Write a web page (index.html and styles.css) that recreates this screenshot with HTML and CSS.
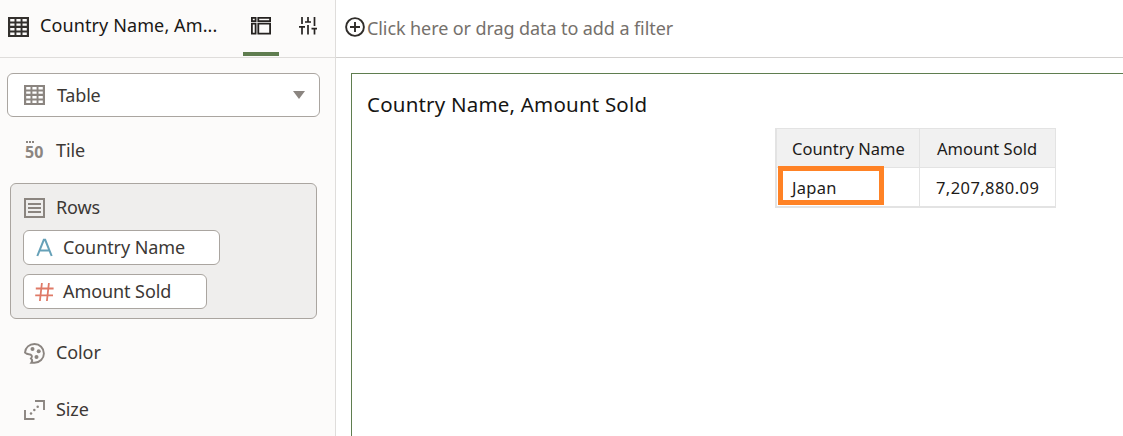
FILE: index.html
```html
<!DOCTYPE html>
<html lang="en">
<head>
<meta charset="utf-8">
<title>Country Name, Amount Sold</title>
<link rel="stylesheet" href="styles.css">
</head>
<body>
<svg class="defs" width="0" height="0">
  <symbol id="grid" viewBox="0 0 21 20">
    <path fill="currentColor" fill-rule="evenodd" d="M0 0H21V20H0ZM2.200 2V4.500H6.500V2ZM8.400 2V4.500H12.600V2ZM14.500 2V4.500H18.800V2ZM2.200 6.500V8.700H6.500V6.500ZM8.400 6.500V8.700H12.600V6.500ZM14.500 6.500V8.700H18.800V6.500ZM2.200 11V13.500H6.500V11ZM8.400 11V13.500H12.600V11ZM14.500 11V13.500H18.800V11ZM2.200 15.500V18H6.500V15.500ZM8.400 15.500V18H12.600V15.500ZM14.500 15.500V18H18.800V15.500Z"/>
  </symbol>
</svg>
<div class="app">
  <aside class="sidebar">
    <header class="side-head">
      <svg class="head-icon" width="21" height="20"><use href="#grid"/></svg>
      <span class="head-title">Country Name, Am...</span>
      <button class="tab active" aria-label="Grammar">
        <svg width="20" height="18" viewBox="0 0 20 18" fill="none" stroke="currentColor" stroke-width="1.800"><path d="M.9.900H4.600V4.100H.9ZM7.300.900H19.100V4.100H7.300ZM.9 6.600H4.600V16.600H.9ZM7.300 6.600H19.100V16.600H7.300Z"/></svg>
      </button>
      <button class="tab" aria-label="Properties">
        <svg width="18" height="18" viewBox="0 0 18 18" fill="none" stroke="currentColor" stroke-width="1.700"><path d="M3 0V7M0 9.900H6M3 9.900V17.500M9 0V5M6 5H12M9 8V17.500M15.500 0V9M12.500 11.600H18M15.500 11.600V17.500"/></svg>
      </button>
    </header>
    <div class="select">
      <svg class="row-icon" width="21" height="20"><use href="#grid"/></svg>
      <span class="label">Table</span>
      <i class="caret"></i>
    </div>
    <div class="drop tile">
      <span class="tile-icon"><i></i><b>50</b></span>
      <span class="label">Tile</span>
    </div>
    <section class="rows">
      <div class="rows-head">
        <svg class="row-icon" width="21" height="20" viewBox="0 0 21 20" fill="none" stroke="currentColor" stroke-width="2"><path d="M1 1H20V19H1Z"/><path d="M4 6H17M4 10H17M4 14H17" stroke-width="1.800"/></svg>
        <span class="label">Rows</span>
      </div>
      <div class="chip country">
        <svg class="blue" width="22" height="20" viewBox="0 0 22 20" fill="none" stroke="currentColor" stroke-width="2"><path d="M3.300 18 9.800 1.800H11.200L17.700 18M5.700 12.600H15.300"/></svg>
        <span class="label">Country Name</span>
      </div>
      <div class="chip amount">
        <svg class="red" width="22" height="20" viewBox="0 0 22 20" fill="none" stroke="currentColor" stroke-width="1.800"><path d="M7.900 1 5.900 19M14.900 1 12.900 19M1.800 6.500H19.600M1.200 13.300H19"/></svg>
        <span class="label">Amount Sold</span>
      </div>
    </section>
    <div class="drop color">
      <svg class="row-icon" width="21" height="21" viewBox="0 0 21 21"><path fill="none" stroke="currentColor" stroke-width="1.900" d="M1 9.500C1.300 4.500 5.300 1 10.500 1A9.400 9.400 0 0 1 10.500 19.800H7.300C8.300 18.400 8.200 16.400 7 15.400C9 13.500 7.500 11.200 4.800 11.200C3.300 11.200 2.300 10.700 1 9.500Z"/><g fill="currentColor"><circle cx="8.500" cy="6" r="2"/><circle cx="14.700" cy="8.200" r="2"/><circle cx="12.500" cy="14" r="2"/></g></svg>
      <span class="label">Color</span>
    </div>
    <div class="drop size">
      <svg class="row-icon" width="21" height="20" viewBox="0 0 21 20"><path fill="none" stroke="currentColor" stroke-width="1.900" d="M11 1H20V10M1 10V19H10.500"/><g fill="currentColor"><circle cx="7" cy="13.500" r="1.250"/><circle cx="10.300" cy="10" r="1.250"/><circle cx="13.700" cy="6.700" r="1.250"/></g></svg>
      <span class="label">Size</span>
    </div>
  </aside>
  <main class="main">
    <div class="filter-bar">
      <svg width="20" height="20" viewBox="0 0 20 20" fill="none" stroke="currentColor" stroke-width="1.900"><circle cx="10" cy="10" r="8.900"/><path d="M5 10H15M10 5V15"/></svg>
      <span class="filter-text">Click here or drag data to add a filter</span>
    </div>
    <section class="canvas">
      <h1 class="viz-title">Country Name, Amount Sold</h1>
      <div class="table">
        <div class="cell th first"><span>Country Name</span></div>
        <div class="cell th"><span>Amount Sold</span></div>
        <div class="cell td first"><span class="t-japan">Japan</span></div>
        <div class="cell td"><span class="t-value">7,207,880.09</span></div>
        <div class="highlight"></div>
      </div>
    </section>
  </main>
</div>
</body>
</html>
```
FILE: styles.css
```css
* { box-sizing: border-box; }
body { margin: 0; background: #fff; font-family: "Noto Sans", "Open Sans", sans-serif; font-size: 18px; color: #3c3835; overflow: hidden; }
svg { display: block; flex: none; }
.defs { position: absolute; }
.app { display: flex; height: 436px; }
.label, .head-title, .filter-text, .viz-title, .cell span { white-space: nowrap; }

.sidebar { width: 336px; flex: none; background: #fcfbfa; border-right: 1px solid #dfdddb; }
.side-head { display: flex; height: 58px; border-bottom: 1px solid #dfdddb; padding-left: 8px; }
.head-icon { margin-top: 17px; color: #33302d; }
.head-title { flex: none; width: 214px; padding: 12px 0 0 11px; line-height: 26px; letter-spacing: 0.11px; color: #1a1816; }
.tab { flex: none; width: 36px; height: 56px; padding: 17px 0 0 8px; margin: 0 12px 0 0; border: 0; border-bottom: 4px solid transparent; background: none; color: #252220; display: flex; align-items: flex-start; }
.tab.active { border-bottom-color: #5f7d4f; }

.row-icon { color: #8b8580; }
.select { display: flex; align-items: center; width: 313px; height: 44px; margin: 15px 0 0 7px; padding: 0 14px 0 16px; background: #fff; border: 1px solid #aaa5a0; border-radius: 6px; }
.select .label { margin-left: 12px; letter-spacing: -0.2px; }
.caret { margin-left: auto; border: 6.500px solid transparent; border-top: 8px solid #8b8580; border-bottom: 0; }
.drop { display: flex; align-items: center; height: 26px; padding-left: 24px; }
.drop .label, .rows-head .label { margin-left: 11px; letter-spacing: -0.1px; }
.tile { margin-top: 20px; }
.tile-icon { display: block; width: 21px; height: 18px; padding-left: 1px; color: #8b8580; }
.tile-icon i { display: block; width: 9px; height: 2px; margin-left: 1px; background: repeating-linear-gradient(90deg, #8b8580 0 2px, transparent 2px 3px); }
.tile-icon b { display: block; font-size: 16px; line-height: 18px; }

.rows { width: 307px; height: 136px; margin: 20px 0 0 10px; padding: 11px 0 0 12px; background: #efeeed; border: 1px solid #aaa5a0; border-radius: 6px; }
.rows-head { display: flex; align-items: center; height: 26px; padding-left: 1px; }
.rows-head .label, .chip .label, .color .label, .size .label { padding-bottom: 2px; }
.chip { display: flex; align-items: center; height: 35px; padding-left: 10px; background: #fff; border: 1px solid #aaa5a0; border-radius: 6px; }
.chip .label { margin-left: 7px; letter-spacing: -0.08px; }
.country { width: 197px; margin-top: 9px; }
.amount { width: 184px; margin-top: 9px; }
.blue { color: #66a1b8; }
.red { color: #df7a67; }
.color { margin-top: 21px; }
.size { margin-top: 31px; }

.main { flex: 1; min-width: 0; }
.filter-bar { display: flex; height: 58px; padding: 17px 0 0 9px; border-bottom: 1px solid #d2d0ce; color: #302d2a; }
.filter-text { margin: -2px 0 0 2px; line-height: 26px; letter-spacing: -0.09px; color: #75706b; }
.canvas { height: 363px; margin: 15px 0 0 15px; padding: 15px 0 0 15px; border: 1px solid #5f7d4f; border-width: 1px 0 0 1px; }
.viz-title { margin: 0; font-size: 20.500px; line-height: 30px; letter-spacing: 0.2px; font-weight: 400; color: #161513; }
.table { position: relative; display: grid; grid-template-columns: 143px 136px; grid-template-rows: 39px 38px; width: 281px; margin: 9px 0 0 408px; border: 1px solid #e3e3e3; border-left-width: 2px; border-right: 0; border-bottom-width: 2px; font-size: 16.500px; color: #1d1b19; }
.cell { display: flex; align-items: center; border-right: 1px solid #e3e3e3; padding-left: 17px; }
.cell.first { padding-left: 15px; }
.th { background: #f1f1f1; border-bottom: 1px solid #e3e3e3; }
.t-japan { letter-spacing: 0.3px; }
.t-value { letter-spacing: 0.42px; margin-left: -1px; }
.highlight { position: absolute; left: 1px; top: 37px; width: 106px; height: 39px; border: 5px solid #ff8225; }
```
